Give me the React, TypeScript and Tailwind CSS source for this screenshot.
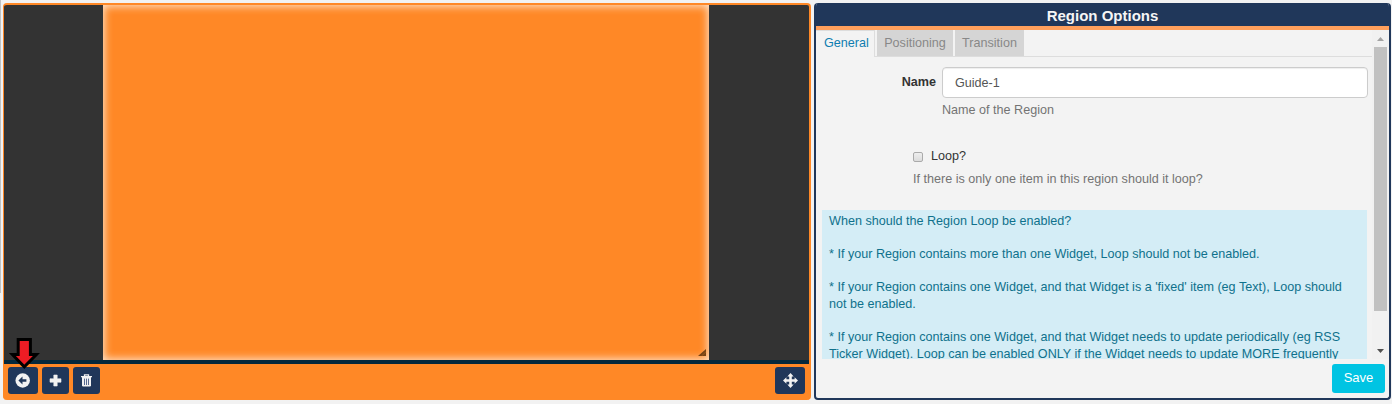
import React from "react";

function ToolButton({ label, className, children }: { label: string; className: string; children: React.ReactNode }) {
  return (
    <button
      aria-label={label}
      className={`flex h-[27px] items-center justify-center rounded-[3px] bg-[#20375a] text-[#f2f2f2] ${className}`}
    >
      {children}
    </button>
  );
}

function BackIcon() {
  return (
    <svg width="16" height="15" viewBox="0 0 16 15">
      <circle cx="7.7" cy="7.5" r="7.2" fill="currentColor" />
      <path d="M3.4 7.5L7.5 3.6V6.3H11.4V8.7H7.5V11.4Z" fill="#20375a" />
    </svg>
  );
}

function PlusIcon() {
  return (
    <svg width="13" height="13" viewBox="0 0 13 13">
      <path d="M4.8 1H8.2V4.8H12V8.2H8.2V12H4.8V8.2H1V4.8H4.8Z" fill="currentColor" stroke="currentColor" strokeWidth="0.6" strokeLinejoin="round" />
    </svg>
  );
}

function TrashIcon() {
  return (
    <svg width="11" height="13" viewBox="0 0 11 13">
      <path d="M3.5 2.2V0.9H7.5V2.2M0 2.6H11" fill="none" stroke="currentColor" strokeWidth="1.3" />
      <path d="M1 3H10V11.3Q10 12.6 8.8 12.6H2.2Q1 12.6 1 11.3Z" fill="currentColor" />
      <path d="M3.5 4.6V11M5.5 4.6V11M7.5 4.6V11" stroke="#465a86" strokeWidth="0.9" />
    </svg>
  );
}

function MoveIcon() {
  return (
    <svg width="15" height="15" viewBox="0 0 15 15">
      <path
        d="M7.5 0L10.7 3.4H8.8V6.2H11.6V4.3L15 7.5L11.6 10.7V8.8H8.8V11.6H10.7L7.5 15L4.3 11.6H6.2V8.8H3.4V10.7L0 7.5L3.4 4.3V6.2H6.2V3.4H4.3Z"
        fill="currentColor"
      />
    </svg>
  );
}

function RegionPreview() {
  return (
    <section className="relative mt-[3px] ml-[2px] flex h-[397px] w-[808px] shrink-0 flex-col overflow-hidden rounded-[4px] border-t-2 border-r-2 border-l border-[#ff8826] bg-[#ff8826]">
      <div className="flex h-[355px] shrink-0 bg-[#333333] pl-[99px]">
        <div className="relative h-[355px] w-[606px] bg-[#ff8826] shadow-[inset_0_0_8px_1px_#ffe9d6]">
          <svg className="absolute right-[3px] bottom-[4px]" width="8" height="7" viewBox="0 0 8 7">
            <path d="M8 0V7H0Z" fill="#784315" />
            <path d="M3.5 7L8 2.8" stroke="#a55d20" strokeWidth="0.8" />
          </svg>
        </div>
      </div>
      <div className="h-1 shrink-0 bg-[#05283c]" />
      <div className="flex h-9 items-start px-1 pt-[3px]">
        <ToolButton label="Back" className="w-[30px]">
          <BackIcon />
        </ToolButton>
        <ToolButton label="Add" className="ml-1 w-[27px]">
          <PlusIcon />
        </ToolButton>
        <ToolButton label="Delete" className="ml-1 w-[27px]">
          <TrashIcon />
        </ToolButton>
        <ToolButton label="Move" className="ml-auto w-[30px]">
          <MoveIcon />
        </ToolButton>
      </div>
      <svg className="absolute top-[332px] left-[4px]" width="34" height="34" viewBox="0 0 34 34">
        <path d="M10.2 2.5H22.4V17.5H28.4L16.3 29.8L4.4 17.5H10.2Z" fill="#ed1c24" stroke="#000" strokeWidth="3" />
      </svg>
    </section>
  );
}

function OptionsPanel() {
  return (
    <section className="mt-[3px] ml-[3px] flex h-[397px] w-[577px] shrink-0 flex-col overflow-hidden rounded-[4px] border-2 border-t-0 border-[#20375a] bg-[#f3f3f3]">
      <h1 className="h-[23px] shrink-0 bg-[#20375a] text-center text-[15px] leading-[26px] font-bold text-[#f5f5f5]">
        Region Options
      </h1>
      <div className="h-1 shrink-0 bg-[#ff9f5c]" />
      <div className="flex h-[329px] shrink-0 overflow-hidden">
        <div className="h-[329px] min-w-0 flex-1 overflow-hidden">
          <nav className="flex h-[27px] border-b border-[#dddddd]">
            <span className="h-[27px] w-[59px] border-t border-r border-[#dddddd] bg-[#f3f3f3] pl-[8px] leading-[24px] text-[#0f7db0]">
              General
            </span>
            <span className="ml-[2px] h-[26px] w-[76px] bg-[#d5d5d5] text-center leading-[26px] text-[#888888]">Positioning</span>
            <span className="ml-[2px] h-[26px] w-[69px] bg-[#d5d5d5] text-center leading-[26px] text-[#888888]">Transition</span>
          </nav>
          <div className="flex pt-[10px]">
            <label className="w-[120px] pt-[7px] text-right leading-[17px] font-bold text-[#333333]">Name</label>
            <div className="ml-[6px]">
              <div className="h-[31px] w-[426px] rounded-[4px] border border-[#cccccc] bg-white pl-3 leading-[30px] text-[#555555] shadow-[inset_0_1px_1px_rgba(0,0,0,0.07)]">
                Guide-1
              </div>
              <p className="mt-[4px] leading-[17px] text-[#737373]">Name of the Region</p>
            </div>
          </div>
          <div className="mt-[29px] ml-[97px]">
            <label className="flex items-center leading-[17px] text-[#333333]">
              <span className="mr-[8px] h-[10px] w-[10px] rounded-[2px] border border-[#aaaaaa] bg-linear-to-b from-[#eeeeee] to-[#dcdcdc]" />
              Loop?
            </label>
            <p className="mt-[6px] leading-[17px] text-[#737373]">
              If there is only one item in this region should it loop?
            </p>
          </div>
          <div className="mt-[22px] ml-[6px] w-[545px] bg-[#d4edf6] pt-[3px] pl-[7px] leading-[16.6px] whitespace-nowrap text-[#0f718c]">
            <p>When should the Region Loop be enabled?</p>
            <p className="mt-[16.6px]">* If your Region contains more than one Widget, Loop should not be enabled.</p>
            <p className="mt-[16.6px]">
              * If your Region contains one Widget, and that Widget is a 'fixed' item (eg Text), Loop should
              <br />
              not be enabled.
            </p>
            <p className="mt-[16.6px]">
              * If your Region contains one Widget, and that Widget needs to update periodically (eg RSS
              <br />
              Ticker Widget). Loop can be enabled ONLY if the Widget needs to update MORE frequently
            </p>
          </div>
        </div>
        <div className="flex h-[329px] w-[17px] flex-col items-center bg-[#f1f1f1]">
          <svg width="7" height="17" viewBox="0 0 7 17">
            <path d="M0 11H7L3.5 7Z" fill="#a3a3a3" />
          </svg>
          <div className="h-[264px] w-[13px] bg-[#c1c1c1]" />
          <svg className="mt-auto" width="7" height="17" viewBox="0 0 7 17">
            <path d="M0 7H7L3.5 11Z" fill="#505050" />
          </svg>
        </div>
      </div>
      <div className="flex justify-end pt-[5px] pr-1">
        <button className="flex h-[29px] w-[53px] items-start justify-center rounded-[3px] bg-[#00c4e3] text-[13px] leading-[27px] text-white">
          Save
        </button>
      </div>
    </section>
  );
}

export default function App() {
  return (
    <main className="flex h-[404px] w-[1392px] overflow-hidden bg-[#f2f2f2] font-['Liberation_Sans',Arial,sans-serif] text-[12.6px]">
      <div className="h-[293px] w-px bg-[#c1c1c1]" />
      <RegionPreview />
      <OptionsPanel />
    </main>
  );
}
